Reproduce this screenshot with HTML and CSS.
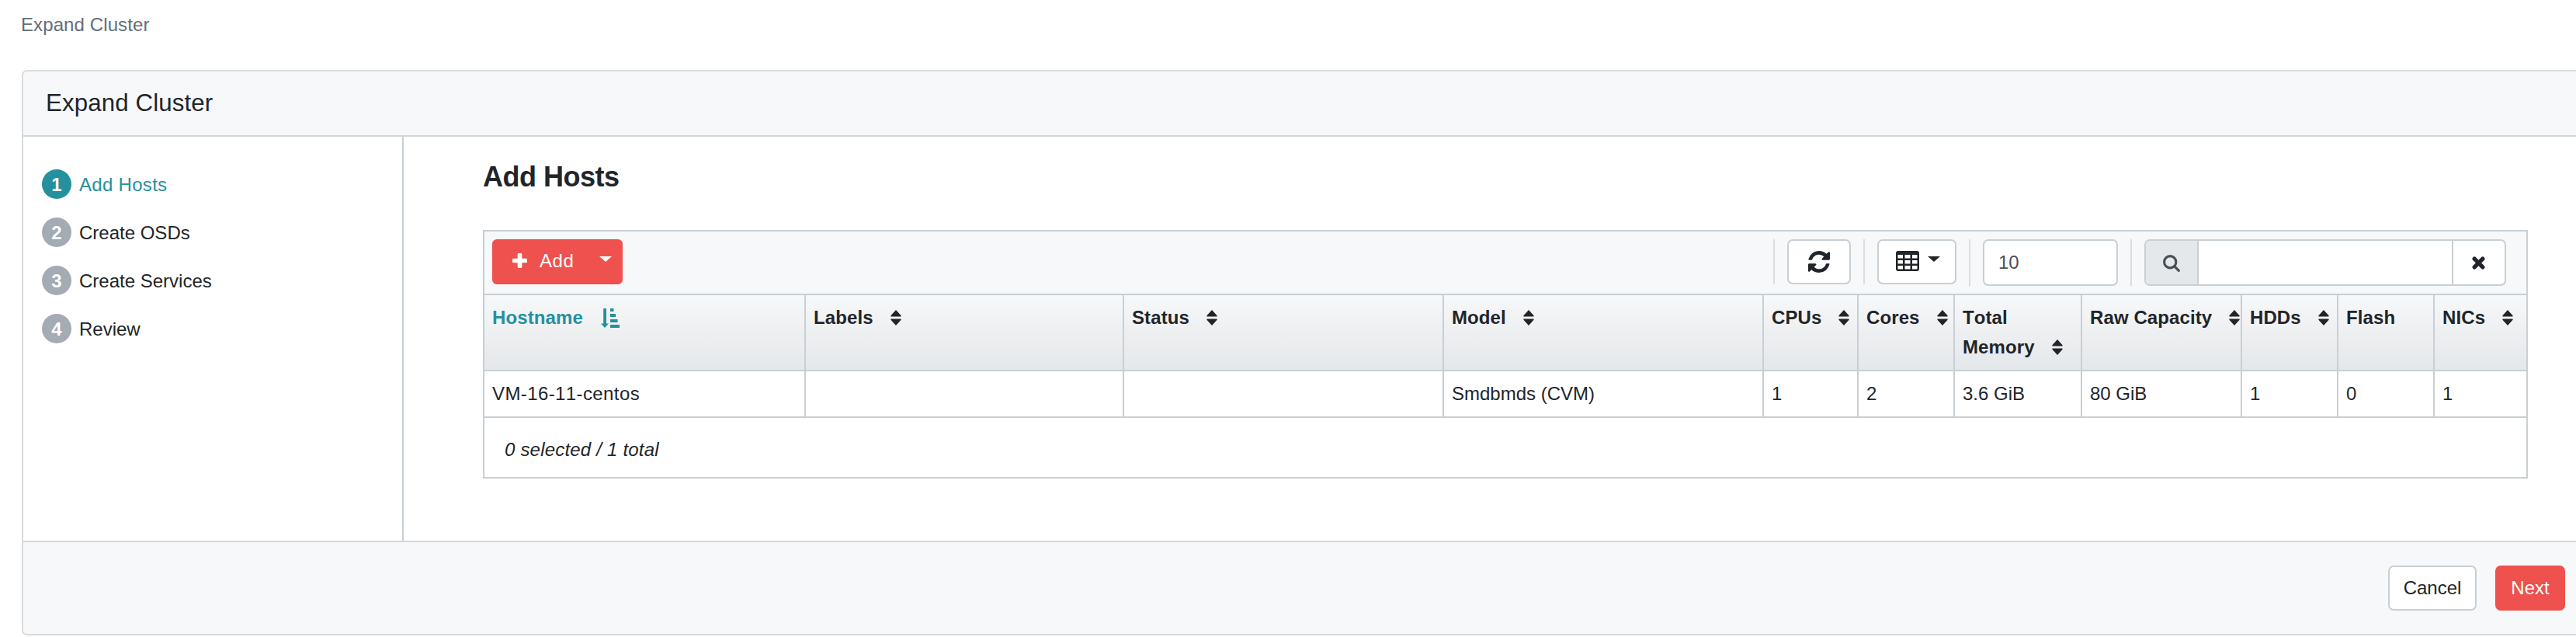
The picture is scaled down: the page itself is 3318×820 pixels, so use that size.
FILE: index.html
```html
<!DOCTYPE html>
<html lang="en">
<head>
<meta charset="utf-8">
<title>Expand Cluster</title>
<link rel="stylesheet" href="styles.css">
</head>
<body>
<svg class="sprite" aria-hidden="true">
  <symbol id="sort" viewBox="0 0 14 20"><path d="M7 0 13.6 7.2Q14 8.4 13 8.4H1Q0 8.4 .4 7.2ZM7 20 .4 12.8Q0 11.6 1 11.6H13Q14 11.6 13.6 12.8Z"/></symbol>
</svg>
<nav class="breadcrumb">Expand Cluster</nav>
<main class="card">
  <header class="card-header">Expand Cluster</header>
  <div class="card-body">
    <ol class="steps">
      <li class="step active"><span class="num">1</span>Add Hosts</li>
      <li class="step"><span class="num">2</span>Create OSDs</li>
      <li class="step"><span class="num">3</span>Create Services</li>
      <li class="step"><span class="num">4</span>Review</li>
    </ol>
    <section class="content">
      <h4 class="heading">Add Hosts</h4>
      <div class="datatable">
        <div class="toolbar">
          <button class="add">
            <svg class="plus" viewBox="0 0 20 20"><path d="M8.5 0h3Q13 0 13 1.500V7h5.500Q20 7 20 8.500v3Q20 13 18.500 13H13v5.500Q13 20 11.500 20h-3Q7 20 7 18.500V13H1.500Q0 13 0 11.500v-3Q0 7 1.500 7H7V1.500Q7 0 8.500 0z"/></svg>
            <span>Add</span>
            <i class="caret"></i>
          </button>
          <div class="tools">
            <div class="tool"><button class="btn refresh"><svg viewBox="0 0 1536 1536"><path d="M1511 928q0 5-1 7-64 268-268 434.500t-478 166.500q-146 0-282.500-55t-243.500-157l-129 129q-19 19-45 19t-45-19-19-45v-448q0-26 19-45t45-19h448q26 0 45 19t19 45-19 45l-137 137q71 66 161 102t187 36q134 0 250-65t186-179q11-17 53-117 8-23 30-23h192q13 0 22.500 9.500t9.500 22.500zM1536 128v448q0 26-19 45t-45 19h-448q-26 0-45-19t-19-45 19-45l138-138q-148-137-349-137-134 0-250 65t-186 179q-11 17-53 117-8 23-30 23h-199q-13 0-22.500-9.500t-9.500-22.500v-7q65-268 270-434.500t480-166.500q146 0 284 55.500t245 156.500l130-129q19-19 45-19t45 19 19 45z"/></svg></button></div>
            <div class="tool"><button class="btn columns"><svg viewBox="0 0 30 26"><path fill-rule="evenodd" d="M3 0H27Q30 0 30 3V23Q30 26 27 26H3Q0 26 0 23V3Q0 0 3 0ZM2.500 5V9.500H9V5ZM11.500 5V9.500H18.500V5ZM21 5V9.500H27.500V5ZM2.500 12V16.500H9V12ZM11.500 12V16.500H18.500V12ZM21 12V16.500H27.500V12ZM2.500 19V23.500H9V19ZM11.500 19V23.500H18.500V19ZM21 19V23.500H27.500V19Z"/></svg><i class="caret"></i></button></div>
            <div class="tool"><div class="limit">10</div></div>
            <div class="tool"><div class="search">
              <span class="prepend"><svg viewBox="0 0 22 22"><circle cx="9.200" cy="9.200" r="7.600"/><path d="M15 15 20.300 20.300"/></svg></span>
              <span class="query"></span>
              <span class="clear"><svg viewBox="0 0 16 16"><path d="M3 3 13 13M13 3 3 13"/></svg></span>
            </div></div>
          </div>
        </div>
        <table class="grid">
          <colgroup><col class="c1"><col class="c2"><col class="c3"><col class="c3"><col class="c4"><col class="c5"><col class="c6"><col class="c7"><col class="c5"><col class="c5"><col class="c8"></colgroup>
          <thead><tr>
            <th class="sorted">Hostname<svg class="sort-asc" viewBox="0 0 24 25"><path d="M3.200 0H7V19.500H10L5 25 0 19.500H3.200ZM12 0H16.500V4H12ZM12 7H19V11H12ZM12 14H21.500V18H12ZM12 21H24V25H12Z"/></svg></th>
            <th>Labels<svg class="sort"><use href="#sort"/></svg></th>
            <th>Status<svg class="sort"><use href="#sort"/></svg></th>
            <th>Model<svg class="sort"><use href="#sort"/></svg></th>
            <th>CPUs<svg class="sort"><use href="#sort"/></svg></th>
            <th>Cores<svg class="sort"><use href="#sort"/></svg></th>
            <th>Total<br>Memory<svg class="sort"><use href="#sort"/></svg></th>
            <th>Raw Capacity<svg class="sort"><use href="#sort"/></svg></th>
            <th>HDDs<svg class="sort"><use href="#sort"/></svg></th>
            <th>Flash</th>
            <th>NICs<svg class="sort"><use href="#sort"/></svg></th>
          </tr></thead>
          <tbody><tr>
            <td class="host">VM-16-11-centos</td><td></td><td></td><td>Smdbmds (CVM)</td><td>1</td><td>2</td><td>3.6 GiB</td><td>80 GiB</td><td>1</td><td>0</td><td>1</td>
          </tr></tbody>
        </table>
        <div class="summary">0 selected / 1 total</div>
      </div>
    </section>
  </div>
  <footer class="card-footer">
    <button class="btn cancel">Cancel</button>
    <button class="btn next">Next</button>
  </footer>
</main>
</body>
</html>
```
FILE: styles.css
```css
* { box-sizing: border-box; }
body {
  margin: 0;
  height: 820px;
  overflow: hidden;
  background: #fff;
  color: #212529;
  font: 24px/38px "Liberation Sans", Arial, sans-serif;
  font-kerning: none;
}
svg { fill: currentColor; }
.sprite { display: none; }
button { font: inherit; color: inherit; margin: 0; }
.breadcrumb { height: 90px; padding: 13px 0 0 27px; color: #656d76; letter-spacing: 0.100px; }
.card {
  display: flex;
  flex-direction: column;
  height: 728px;
  margin-left: 28px;
  border: 2px solid #d9dadb;
  border-right: 0;
  border-radius: 7px 0 0 7px;
  overflow: hidden;
}
.card-header {
  height: 84px;
  padding: 22px 29px 0;
  background: #f7f8fa;
  border-bottom: 2px solid #d3d6d9;
  font-size: 31.200px;
  letter-spacing: 0.150px;
}
.card-body { display: flex; height: 520px; }
.steps {
  display: flex;
  flex-direction: column;
  gap: 24px;
  width: 490px;
  margin: 0;
  padding: 42px 0 0 24px;
  border-right: 2px solid #c8cfd5;
  list-style: none;
}
.step { display: flex; gap: 10px; height: 38px; line-height: 39px; }
.step.active { color: #25909e; letter-spacing: 0.300px; }
.num {
  width: 38px;
  height: 38px;
  border-radius: 50%;
  background: #a4abb5;
  color: #fff;
  font-weight: bold;
  letter-spacing: 0;
  text-align: center;
}
.active .num { background: #25909e; }
.content { flex: 1; padding: 30px 62px 0 102px; }
.heading {
  margin: 0 0 46px;
  font-size: 36px;
  line-height: 44px;
  letter-spacing: -0.500px;
}
.datatable { border: 2px solid #c8cfd5; }
.toolbar {
  display: flex;
  justify-content: space-between;
  height: 80px;
  padding: 10px 26px 0 10px;
  background: #f7f8fa;
}
.add {
  display: flex;
  align-items: center;
  width: 168px;
  height: 58px;
  padding: 0 14px 0 26px;
  border: 0;
  border-radius: 6px;
  background: #ee514e;
  color: #fff;
}
.plus { width: 19px; height: 19px; margin: 0 16px 4px 0; }
.add span { padding-bottom: 2px; letter-spacing: 0.600px; }
.add .caret { margin-left: auto; }
.caret {
  border: 8px solid transparent;
  border-top: 7px solid currentColor;
  border-bottom: 0;
  margin-bottom: 8px;
}
.tools { display: flex; align-items: flex-start; gap: 16px; }
.tool { padding-left: 16px; border-left: 2px solid #dadde1; }
.btn {
  display: flex;
  align-items: center;
  justify-content: center;
  height: 58px;
  padding: 0;
  border: 2px solid #c8cfd5;
  border-radius: 7px;
  background: #fff;
}
.refresh { width: 82px; }
.refresh svg { width: 28px; height: 28px; }
.columns { width: 102px; gap: 11px; padding-left: 3px; }
.columns svg { width: 30px; height: 26px; margin-bottom: 3px; }
.limit {
  width: 174px;
  height: 60px;
  padding: 9px 18px;
  border: 2px solid #c8cfd5;
  border-radius: 7px;
  background: #fff;
  color: #495057;
}
.search {
  display: flex;
  width: 466px;
  height: 60px;
  border: 2px solid #c8cfd5;
  border-radius: 7px;
  background: #fff;
  overflow: hidden;
}
.prepend, .clear { display: flex; align-items: center; justify-content: center; }
.prepend { width: 68px; background: #e4e8eb; border-right: 2px solid #c8cfd5; }
.prepend svg {
  width: 22px;
  height: 22px;
  margin-top: 2px;
  fill: none;
  stroke: #495057;
  stroke-width: 3.200;
  stroke-linecap: round;
}
.query { flex: 1; }
.clear { width: 68px; padding-right: 2px; border-left: 2px solid #c8cfd5; }
.clear svg { width: 17px; height: 17px; stroke: #212529; stroke-width: 5; stroke-linecap: round; }
.grid {
  width: 100%;
  table-layout: fixed;
  border-spacing: 0;
  border-top: 2px solid #c8cfd5;
}
.c1 { width: 414px; }
.c2 { width: 410px; }
.c3 { width: 412px; }
.c4 { width: 122px; }
.c5 { width: 124px; }
.c6 { width: 164px; }
.c7 { width: 206px; }
.c8 { width: 118px; }
th, td {
  padding: 10px 0 10px 10px;
  border-right: 2px solid #c8cfd5;
  border-bottom: 2px solid #c8cfd5;
  text-align: left;
  vertical-align: top;
  white-space: nowrap;
  overflow: hidden;
}
th { height: 98px; letter-spacing: 0.100px; background: linear-gradient(#f7f8fa, #eeeff1 50%, #e4e8eb); }
td { height: 60px; }
th:last-child, td:last-child { border-right: 0; }
.host { letter-spacing: 0.400px; }
.sorted { color: #25909e; }
.sort { width: 14px; height: 20px; margin-left: 22px; vertical-align: -2px; }
.sort-asc { width: 24px; height: 25px; margin-left: 23px; vertical-align: -5px; }
.summary { height: 76px; padding: 22px 26px 0; font-style: italic; letter-spacing: 0.200px; }
.card-footer {
  display: flex;
  justify-content: flex-end;
  gap: 24px;
  height: 120px;
  padding: 30px 14px 0 0;
  background: #f7f8fa;
  border-top: 2px solid #d5d7d9;
}
.cancel { width: 114px; }
.next { width: 90px; border-color: #ee514e; background: #ee514e; color: #fff; }
```
